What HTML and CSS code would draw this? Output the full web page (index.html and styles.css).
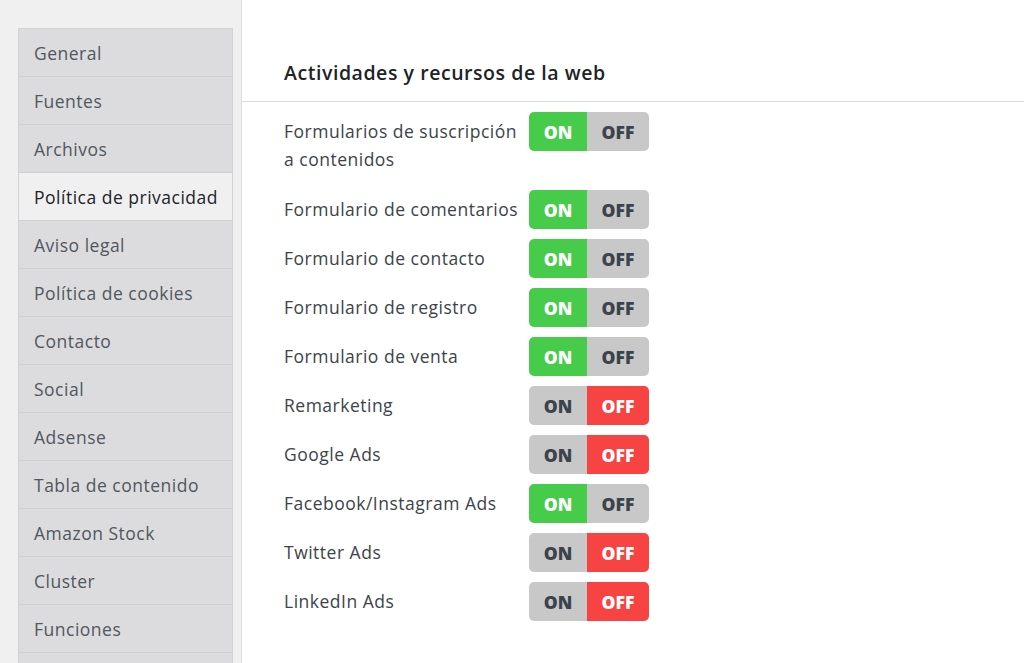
FILE: index.html
```html
<!DOCTYPE html>
<html lang="es">
<head>
<meta charset="utf-8">
<title>Ajustes</title>
<link rel="stylesheet" href="styles.css">
</head>
<body>
<aside class="side">
  <ul class="menu">
    <li class="item">General</li>
    <li class="item">Fuentes</li>
    <li class="item">Archivos</li>
    <li class="item active">Política de privacidad</li>
    <li class="item">Aviso legal</li>
    <li class="item">Política de cookies</li>
    <li class="item">Contacto</li>
    <li class="item">Social</li>
    <li class="item">Adsense</li>
    <li class="item">Tabla de contenido</li>
    <li class="item">Amazon Stock</li>
    <li class="item">Cluster</li>
    <li class="item">Funciones</li>
    <li class="item"></li>
  </ul>
</aside>
<main class="main">
  <h2 class="title">Actividades y recursos de la web</h2>
  <div class="rows">
    <div class="row first"><div class="label">Formularios de suscripción a contenidos</div><div class="toggle on"><span class="t-on">ON</span><span class="t-off">OFF</span></div></div>
    <div class="row"><div class="label">Formulario de comentarios</div><div class="toggle on"><span class="t-on">ON</span><span class="t-off">OFF</span></div></div>
    <div class="row"><div class="label">Formulario de contacto</div><div class="toggle on"><span class="t-on">ON</span><span class="t-off">OFF</span></div></div>
    <div class="row"><div class="label">Formulario de registro</div><div class="toggle on"><span class="t-on">ON</span><span class="t-off">OFF</span></div></div>
    <div class="row"><div class="label">Formulario de venta</div><div class="toggle on"><span class="t-on">ON</span><span class="t-off">OFF</span></div></div>
    <div class="row"><div class="label">Remarketing</div><div class="toggle off"><span class="t-on">ON</span><span class="t-off">OFF</span></div></div>
    <div class="row"><div class="label">Google Ads</div><div class="toggle off"><span class="t-on">ON</span><span class="t-off">OFF</span></div></div>
    <div class="row"><div class="label">Facebook/Instagram Ads</div><div class="toggle on"><span class="t-on">ON</span><span class="t-off">OFF</span></div></div>
    <div class="row"><div class="label">Twitter Ads</div><div class="toggle off"><span class="t-on">ON</span><span class="t-off">OFF</span></div></div>
    <div class="row"><div class="label">LinkedIn Ads</div><div class="toggle off"><span class="t-on">ON</span><span class="t-off">OFF</span></div></div>
  </div>
</main>
</body>
</html>
```
FILE: styles.css
```css
* { box-sizing: border-box; }
html, body { height: 100%; }
body {
  margin: 0;
  display: flex;
  overflow: hidden;
  font-family: "Open Sans", "Liberation Sans", sans-serif;
  color: #3c434a;
  background: #fff;
}
.side {
  width: 242px;
  flex: none;
  background: #f0f0f1;
  border-right: 1px solid #dcdcde;
  padding: 28px 8px 0 18px;
}
.menu {
  list-style: none;
  margin: 0;
  padding: 0;
  border: 1px solid #d2d2d4;
  border-bottom: 0;
}
.item {
  height: 48px;
  line-height: 49px;
  padding-left: 15px;
  background: #dcdcde;
  border-bottom: 1px solid #cfcfd1;
  font-size: 17.5px;
  letter-spacing: 0.5px;
  color: #50575e;
  white-space: nowrap;
}
.item.active {
  background: #f0f0f1;
  color: #1d2327;
}
.main {
  flex: 1;
  background: #fff;
}
.title {
  margin: 0;
  height: 102px;
  padding: 57px 0 0 42px;
  line-height: 32px;
  font-size: 19.5px;
  letter-spacing: 0.55px;
  font-weight: 600;
  color: #1d2327;
  border-bottom: 1px solid #dcdcde;
}
.rows {
  padding: 10px 0 0 42px;
  display: flex;
  flex-direction: column;
  gap: 10px;
}
.row {
  display: flex;
  align-items: flex-start;
}
.row.first { margin-bottom: 1px; }
.label {
  width: 245px;
  padding: 5px 6px 6px 0;
  line-height: 28px;
  font-size: 17.5px;
  letter-spacing: 0.5px;
  color: #3c434a;
}
.toggle {
  display: flex;
  flex: none;
  width: 120px;
  height: 39px;
  border-radius: 5px;
  overflow: hidden;
  font-size: 17.5px;
  font-weight: 800;
  line-height: 40px;
  text-align: center;
}
.t-on { width: 58px; }
.t-off { width: 62px; }
.toggle.on .t-on { background: #46cb4a; color: #fff; }
.toggle.on .t-off { background: #c8c8c8; color: #3c434a; }
.toggle.off .t-on { background: #c8c8c8; color: #3c434a; }
.toggle.off .t-off { background: #f84343; color: #fff; }
```
